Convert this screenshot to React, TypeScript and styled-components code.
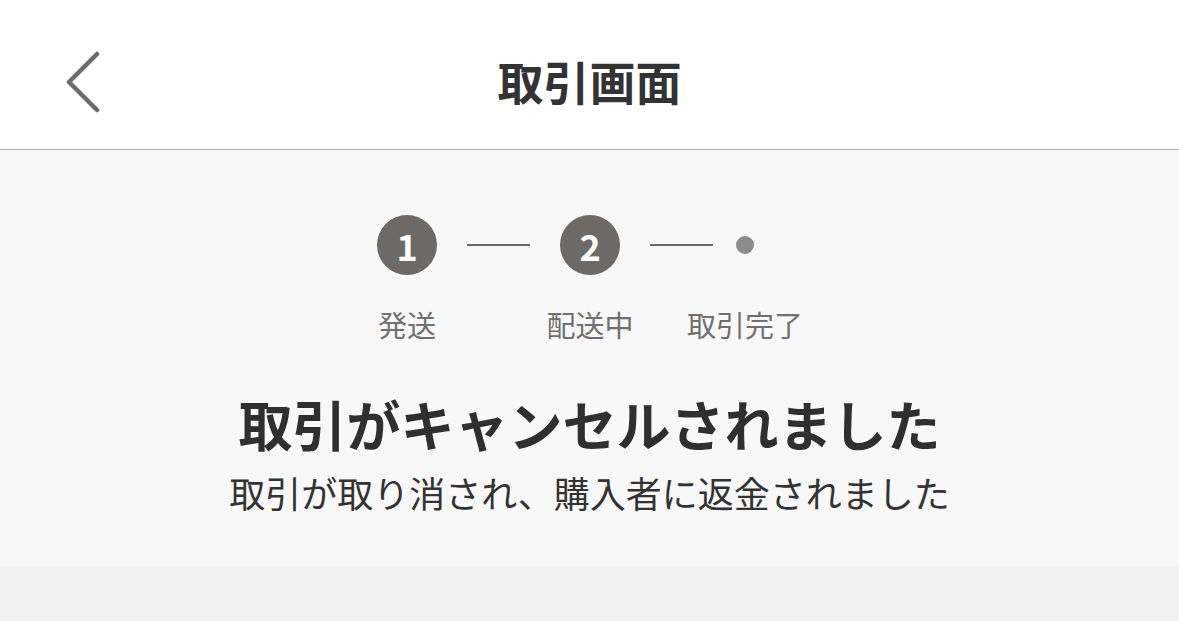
import React from "react";
import styled, { createGlobalStyle } from "styled-components";

const GlobalStyle = createGlobalStyle`
  html, body {
    margin: 0;
    padding: 0;
    background: #f1f1f1;
  }
  body {
    font-family: "Noto Sans CJK JP", "Noto Sans", sans-serif;
    color: #333333;
  }
`;

const Page = styled.div`
  min-height: 621px;
  display: flex;
  flex-direction: column;
  background: #f1f1f1;
`;

const Header = styled.header`
  height: 149px;
  background: #ffffff;
  border-bottom: 1px solid #b3b3b3;
  display: grid;
  grid-template-columns: 150px 1fr 150px;
  align-items: center;
`;

const BackButton = styled.button`
  width: 150px;
  height: 149px;
  border: none;
  background: none;
  padding: 14px 0 0 64px;
  display: flex;
  align-items: center;
  cursor: pointer;
`;

const Title = styled.h1`
  margin: 0;
  padding-top: 10px;
  text-align: center;
  font-size: 46px;
  font-weight: 700;
  color: #333333;
  letter-spacing: 0;
  line-height: 1;
`;

const StatusPanel = styled.section`
  background: #f8f8f8;
  padding: 65px 0 46px;
  display: flex;
  flex-direction: column;
  align-items: center;
`;

const Stepper = styled.div`
  display: flex;
  align-items: flex-start;
  padding-right: 48px;
`;

const StepItem = styled.div<{ $size: number }>`
  width: ${(p) => p.$size}px;
  display: flex;
  flex-direction: column;
  align-items: center;
`;

const MarkerBox = styled.div`
  height: 60px;
  display: flex;
  align-items: center;
  justify-content: center;
`;

const NumberMarker = styled.div`
  width: 60px;
  height: 60px;
  border-radius: 50%;
  background: #6b6a68;
  color: #ffffff;
  font-size: 36px;
  font-weight: 700;
  display: flex;
  align-items: center;
  justify-content: center;
  line-height: 1;
`;

const DotMarker = styled.div`
  width: 18px;
  height: 18px;
  border-radius: 50%;
  background: #8c8c8c;
`;

const StepLabel = styled.div`
  margin-top: 29px;
  white-space: nowrap;
  font-size: 29px;
  line-height: 40px;
  color: #707070;
`;

const Connector = styled.div<{ $before: number; $after: number }>`
  width: 63px;
  height: 2px;
  margin: 29px ${(p) => p.$after}px 0 ${(p) => p.$before}px;
  background: #6b6a68;
`;

const Heading = styled.h2`
  margin: 44px 0 0;
  font-size: 54px;
  font-weight: 700;
  line-height: 72px;
  color: #2f2f2f;
`;

const Message = styled.p`
  margin: 4px 0 0;
  font-size: 36px;
  line-height: 56px;
  color: #333333;
`;

const Rest = styled.div`
  flex: 1;
  background: #f1f1f1;
`;

const ChevronLeft = () => (
  <svg width="38" height="62" viewBox="0 0 38 62" fill="none">
    <path
      d="M33 3 L5 31 L33 59"
      stroke="#6b6b6b"
      strokeWidth="4.5"
      strokeLinecap="round"
      strokeLinejoin="round"
    />
  </svg>
);

const steps = [
  { label: "発送", num: "1" },
  { label: "配送中", num: "2" },
  { label: "取引完了", num: null },
];

export default function App() {
  return (
    <>
      <GlobalStyle />
      <Page>
        <Header>
          <BackButton aria-label="戻る">
            <ChevronLeft />
          </BackButton>
          <Title>取引画面</Title>
          <div />
        </Header>
        <StatusPanel>
          <Stepper>
            {steps.map((s, i) => (
              <React.Fragment key={s.label}>
                {i > 0 && <Connector $before={30} $after={i === 2 ? 23 : 30} />}
                <StepItem $size={s.num ? 60 : 18}>
                  <MarkerBox>
                    {s.num ? <NumberMarker>{s.num}</NumberMarker> : <DotMarker />}
                  </MarkerBox>
                  <StepLabel>{s.label}</StepLabel>
                </StepItem>
              </React.Fragment>
            ))}
          </Stepper>
          <Heading>取引がキャンセルされました</Heading>
          <Message>取引が取り消され、購入者に返金されました</Message>
        </StatusPanel>
        <Rest />
      </Page>
    </>
  );
}
